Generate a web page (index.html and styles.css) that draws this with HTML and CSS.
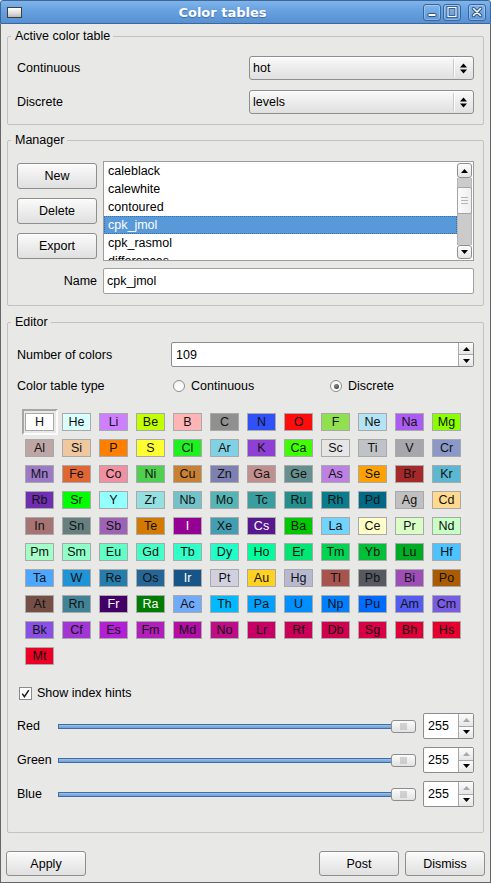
FILE: index.html
```html
<!DOCTYPE html>
<html>
<head>
<meta charset="utf-8">
<title>Color tables</title>
<link rel="stylesheet" href="styles.css">
</head>
<body>
<div class="window">
  <div class="titlebar">
    <span class="winicon"></span>
    <span class="title">Color tables</span>
    <div class="tbtns">
      <span class="tbtn"><svg width="12" height="12" viewBox="0 0 12 12"><rect x="2" y="7.5" width="8" height="3" rx="0.5" fill="#fff" stroke="#2c5386" stroke-width="1"/></svg></span>
      <span class="tbtn"><svg width="12" height="12" viewBox="0 0 12 12"><rect x="2" y="1.5" width="8" height="9" fill="none" stroke="#2c5386" stroke-width="3"/><rect x="2" y="1.5" width="8" height="9" fill="none" stroke="#fff" stroke-width="1.2"/></svg></span>
      <span class="tbtn tclose"><svg width="12" height="12" viewBox="0 0 12 12"><path d="M2.5 2.5 L9.5 9.5 M9.5 2.5 L2.5 9.5" stroke="#2c5386" stroke-width="3.4" stroke-linecap="round"/><path d="M2.5 2.5 L9.5 9.5 M9.5 2.5 L2.5 9.5" stroke="#fff" stroke-width="1.6" stroke-linecap="round"/></svg></span>
    </div>
  </div>

  <div class="client">
    <fieldset class="group g-active">
      <legend>Active color table</legend>
      <div class="inner active-grid">
        <span class="lbl">Continuous</span>
        <div class="combo"><span class="ctext">hot</span><span class="carrow"><svg width="7" height="11" viewBox="0 0 7 11"><polygon points="0,4.5 3.5,0.5 7,4.5" fill="#000"/><polygon points="0,6.5 7,6.5 3.5,10.5" fill="#000"/></svg></span></div>
        <span class="lbl">Discrete</span>
        <div class="combo"><span class="ctext">levels</span><span class="carrow"><svg width="7" height="11" viewBox="0 0 7 11"><polygon points="0,4.5 3.5,0.5 7,4.5" fill="#000"/><polygon points="0,6.5 7,6.5 3.5,10.5" fill="#000"/></svg></span></div>
      </div>
    </fieldset>

    <fieldset class="group g-manager">
      <legend>Manager</legend>
      <div class="inner manager-grid">
        <div class="mbtns">
          <div class="btn">New</div>
          <div class="btn">Delete</div>
          <div class="btn">Export</div>
        </div>
        <div class="list">
          <div class="items">
            <div class="item">caleblack</div>
            <div class="item">calewhite</div>
            <div class="item">contoured</div>
            <div class="item sel">cpk_jmol</div>
            <div class="item">cpk_rasmol</div>
            <div class="item">differences</div>
          </div>
          <div class="vscroll">
            <div class="sb-btn sb-up"><svg width="7" height="4" viewBox="0 0 7 4"><polygon points="0,4 3.5,0 7,4" fill="#000"/></svg></div>
            <div class="sb-track"><div class="sb-handle"><span></span><span></span><span></span></div></div>
            <div class="sb-btn sb-down"><svg width="7" height="4" viewBox="0 0 7 4"><polygon points="0,0 7,0 3.5,4" fill="#000"/></svg></div>
          </div>
        </div>
        <span class="lbl name-lbl">Name</span>
        <div class="textin">cpk_jmol</div>
      </div>
    </fieldset>

    <fieldset class="group g-editor">
      <legend>Editor</legend>
      <div class="inner editor">
        <div class="erow">
          <span class="lbl">Number of colors</span>
          <div class="spin">
            <span class="val">109</span>
            <span class="sbtns">
              <span class="sbtn"><svg width="7" height="4" viewBox="0 0 7 4"><polygon points="0,4 3.5,0 7,4" fill="#000"/></svg></span>
              <span class="sbtn"><svg width="7" height="4" viewBox="0 0 7 4"><polygon points="0,0 7,0 3.5,4" fill="#000"/></svg></span>
            </span>
          </div>
        </div>
        <div class="erow typerow">
          <span class="lbl">Color table type</span>
          <div class="radios">
            <span class="radio"><span class="rdot"></span>Continuous</span>
            <span class="radio on"><span class="rdot"></span>Discrete</span>
          </div>
        </div>

        <div class="swatches">
          <span class="cell sel" style="background:#FFFFFF">H</span>
          <span class="cell" style="background:#D9FFFF">He</span>
          <span class="cell" style="background:#CC80FF">Li</span>
          <span class="cell" style="background:#C2FF00">Be</span>
          <span class="cell" style="background:#FFB5B5">B</span>
          <span class="cell" style="background:#909090">C</span>
          <span class="cell" style="background:#3050F8">N</span>
          <span class="cell" style="background:#FF0D0D">O</span>
          <span class="cell" style="background:#90E050">F</span>
          <span class="cell" style="background:#B3E3F5">Ne</span>
          <span class="cell" style="background:#AB5CF2">Na</span>
          <span class="cell" style="background:#8AFF00">Mg</span>
          <span class="cell" style="background:#BFA6A6">Al</span>
          <span class="cell" style="background:#F0C8A0">Si</span>
          <span class="cell" style="background:#FF8000">P</span>
          <span class="cell" style="background:#FFFF30">S</span>
          <span class="cell" style="background:#1FF01F">Cl</span>
          <span class="cell" style="background:#80D1E3">Ar</span>
          <span class="cell" style="background:#8F40D4">K</span>
          <span class="cell" style="background:#3DFF00">Ca</span>
          <span class="cell" style="background:#E6E6E6">Sc</span>
          <span class="cell" style="background:#BFC2C7">Ti</span>
          <span class="cell" style="background:#A6A6AB">V</span>
          <span class="cell" style="background:#8A99C7">Cr</span>
          <span class="cell" style="background:#9C7AC7">Mn</span>
          <span class="cell" style="background:#E06633">Fe</span>
          <span class="cell" style="background:#F090A0">Co</span>
          <span class="cell" style="background:#50D050">Ni</span>
          <span class="cell" style="background:#C88033">Cu</span>
          <span class="cell" style="background:#7D80B0">Zn</span>
          <span class="cell" style="background:#C28F8F">Ga</span>
          <span class="cell" style="background:#668F8F">Ge</span>
          <span class="cell" style="background:#BD80E3">As</span>
          <span class="cell" style="background:#FFA100">Se</span>
          <span class="cell" style="background:#A62929">Br</span>
          <span class="cell" style="background:#5CB8D1">Kr</span>
          <span class="cell" style="background:#702EB0">Rb</span>
          <span class="cell" style="background:#00FF00">Sr</span>
          <span class="cell" style="background:#94FFFF">Y</span>
          <span class="cell" style="background:#94E0E0">Zr</span>
          <span class="cell" style="background:#73C2C9">Nb</span>
          <span class="cell" style="background:#54B5B5">Mo</span>
          <span class="cell" style="background:#3B9E9E">Tc</span>
          <span class="cell" style="background:#248F8F">Ru</span>
          <span class="cell" style="background:#0A7D8C">Rh</span>
          <span class="cell" style="background:#006985">Pd</span>
          <span class="cell" style="background:#C0C0C0">Ag</span>
          <span class="cell" style="background:#FFD98F">Cd</span>
          <span class="cell" style="background:#A67573">In</span>
          <span class="cell" style="background:#668080">Sn</span>
          <span class="cell" style="background:#9E63B5">Sb</span>
          <span class="cell" style="background:#D47A00">Te</span>
          <span class="cell lt" style="background:#940094">I</span>
          <span class="cell" style="background:#429EB0">Xe</span>
          <span class="cell lt" style="background:#57178F">Cs</span>
          <span class="cell" style="background:#00C900">Ba</span>
          <span class="cell" style="background:#70D4FF">La</span>
          <span class="cell" style="background:#FFFFC7">Ce</span>
          <span class="cell" style="background:#D9FFC7">Pr</span>
          <span class="cell" style="background:#C7FFC7">Nd</span>
          <span class="cell" style="background:#A3FFC7">Pm</span>
          <span class="cell" style="background:#8FFFC7">Sm</span>
          <span class="cell" style="background:#61FFC7">Eu</span>
          <span class="cell" style="background:#45FFC7">Gd</span>
          <span class="cell" style="background:#30FFC7">Tb</span>
          <span class="cell" style="background:#1FFFC7">Dy</span>
          <span class="cell" style="background:#00FF9C">Ho</span>
          <span class="cell" style="background:#00E675">Er</span>
          <span class="cell" style="background:#00D452">Tm</span>
          <span class="cell" style="background:#00BF38">Yb</span>
          <span class="cell" style="background:#00AB24">Lu</span>
          <span class="cell" style="background:#4DC2FF">Hf</span>
          <span class="cell" style="background:#4DA6FF">Ta</span>
          <span class="cell" style="background:#2194D6">W</span>
          <span class="cell" style="background:#267DAB">Re</span>
          <span class="cell" style="background:#266696">Os</span>
          <span class="cell lt" style="background:#175487">Ir</span>
          <span class="cell" style="background:#D0D0E0">Pt</span>
          <span class="cell" style="background:#FFD123">Au</span>
          <span class="cell" style="background:#B8B8D0">Hg</span>
          <span class="cell" style="background:#A6544D">Tl</span>
          <span class="cell" style="background:#575961">Pb</span>
          <span class="cell" style="background:#9E4FB5">Bi</span>
          <span class="cell" style="background:#AB5C00">Po</span>
          <span class="cell" style="background:#754F45">At</span>
          <span class="cell" style="background:#428296">Rn</span>
          <span class="cell lt" style="background:#420066">Fr</span>
          <span class="cell lt" style="background:#007D00">Ra</span>
          <span class="cell" style="background:#70ABFA">Ac</span>
          <span class="cell" style="background:#00BAFF">Th</span>
          <span class="cell" style="background:#00A1FF">Pa</span>
          <span class="cell" style="background:#008FFF">U</span>
          <span class="cell" style="background:#0080FF">Np</span>
          <span class="cell" style="background:#006BFF">Pu</span>
          <span class="cell" style="background:#545CF2">Am</span>
          <span class="cell" style="background:#785CE3">Cm</span>
          <span class="cell" style="background:#8A4FE3">Bk</span>
          <span class="cell" style="background:#A136D4">Cf</span>
          <span class="cell" style="background:#B31FD4">Es</span>
          <span class="cell" style="background:#B31FBA">Fm</span>
          <span class="cell" style="background:#B30DA6">Md</span>
          <span class="cell" style="background:#BD0D87">No</span>
          <span class="cell" style="background:#C70066">Lr</span>
          <span class="cell" style="background:#CC0059">Rf</span>
          <span class="cell" style="background:#D1004F">Db</span>
          <span class="cell" style="background:#D90045">Sg</span>
          <span class="cell" style="background:#E00038">Bh</span>
          <span class="cell" style="background:#E6002E">Hs</span>
          <span class="cell" style="background:#EB0026">Mt</span>
        </div>

        <div class="checkrow">
          <span class="checkbox"><svg width="11" height="11" viewBox="0 0 11 11"><path d="M2.2 5.6 L4.4 8.6 L8.8 2.2" fill="none" stroke="#1a1a1a" stroke-width="1.5"/></svg></span>
          <span>Show index hints</span>
        </div>

        <div class="sliders">
          <div class="srow">
            <span class="lbl">Red</span>
            <div class="slider"><span class="groove"></span><span class="handle"><i></i></span></div>
            <div class="spin sspin">
              <span class="val">255</span>
              <span class="sbtns">
                <span class="sbtn"><svg width="7" height="4" viewBox="0 0 7 4"><polygon points="0,4 3.5,0 7,4" fill="#a8a8a8"/></svg></span>
                <span class="sbtn"><svg width="7" height="4" viewBox="0 0 7 4"><polygon points="0,0 7,0 3.5,4" fill="#000"/></svg></span>
              </span>
            </div>
          </div>
          <div class="srow">
            <span class="lbl">Green</span>
            <div class="slider"><span class="groove"></span><span class="handle"><i></i></span></div>
            <div class="spin sspin">
              <span class="val">255</span>
              <span class="sbtns">
                <span class="sbtn"><svg width="7" height="4" viewBox="0 0 7 4"><polygon points="0,4 3.5,0 7,4" fill="#a8a8a8"/></svg></span>
                <span class="sbtn"><svg width="7" height="4" viewBox="0 0 7 4"><polygon points="0,0 7,0 3.5,4" fill="#000"/></svg></span>
              </span>
            </div>
          </div>
          <div class="srow">
            <span class="lbl">Blue</span>
            <div class="slider"><span class="groove"></span><span class="handle"><i></i></span></div>
            <div class="spin sspin">
              <span class="val">255</span>
              <span class="sbtns">
                <span class="sbtn"><svg width="7" height="4" viewBox="0 0 7 4"><polygon points="0,4 3.5,0 7,4" fill="#a8a8a8"/></svg></span>
                <span class="sbtn"><svg width="7" height="4" viewBox="0 0 7 4"><polygon points="0,0 7,0 3.5,4" fill="#000"/></svg></span>
              </span>
            </div>
          </div>
        </div>
      </div>
    </fieldset>

    <div class="footer">
      <div class="btn">Apply</div>
      <div class="spacer"></div>
      <div class="btn">Post</div>
      <div class="btn">Dismiss</div>
    </div>
  </div>
</div>
</body>
</html>
```

FILE: styles.css
```css
* { box-sizing: border-box; }
html, body { margin: 0; padding: 0; }
body {
  width: 491px;
  height: 883px;
  overflow: hidden;
  background: #e8e8e7;
  font-family: "Liberation Sans", Arial, sans-serif;
  font-size: 12.5px;
  color: #000;
}
.window {
  width: 491px;
  height: 883px;
  display: flex;
  flex-direction: column;
}

/* title bar */
.titlebar {
  height: 24px;
  flex: none;
  display: flex;
  align-items: center;
  padding: 0 4px 0 6px;
  background: linear-gradient(#80b5ea, #68a2e0 40%, #5791d3);
  border: 1px solid #3d679b;
  border-radius: 3px 3px 0 0;
}
.winicon {
  width: 15px;
  height: 11px;
  border: 1px solid #3f3f3f;
  background: linear-gradient(#ffffff, #dcdcdc 60%, #b9b9b9);
  flex: none;
}
.title {
  flex: 1;
  text-align: center;
  font-family: "DejaVu Sans", sans-serif;
  font-weight: bold;
  font-size: 13px;
  color: #fff;
  text-shadow: 0 1px 1px rgba(30, 60, 110, 0.45);
}
.tbtns { display: flex; gap: 2px; }
.tbtn {
  width: 18px;
  height: 17px;
  border: 1px solid #3a659c;
  border-radius: 3px;
  background: linear-gradient(#82b6ea, #5f99d8);
  box-shadow: inset 0 0 0 1px rgba(255, 255, 255, 0.25);
  display: flex;
  align-items: center;
  justify-content: center;
}
.tclose { margin-left: 5px; }

/* client */
.client {
  flex: 1;
  display: flex;
  flex-direction: column;
  padding: 5px 5px 6px;
  border: 1px solid #666;
  border-top: none;
}
.group {
  margin: 0 1px;
  padding: 0;
  border: 1px solid #c2c2c2;
  border-radius: 2px;
  min-width: 0;
}
.group > legend {
  margin-left: 3px;
  padding: 0 3px 0 4px;
  line-height: 15px;
  height: 15px;
}
.inner { padding: 0 9px; }
.lbl { display: flex; align-items: center; }

/* active */
.active-grid {
  padding-top: 12px;
  padding-bottom: 10px;
  display: grid;
  grid-template-columns: 232px 1fr;
  grid-auto-rows: 24px;
  row-gap: 10px;
}
.combo {
  display: flex;
  align-items: center;
  border: 1px solid #8e8e8e;
  border-radius: 3px;
  background: linear-gradient(#fafafa, #ececec 50%, #e0e0e0);
  box-shadow: inset 0 1px 0 #fff;
}
.ctext { flex: 1; padding-left: 3px; }
.carrow {
  width: 20px;
  height: 18px;
  border-left: 1px solid #c9c9c9;
  box-shadow: inset 1px 0 0 #fff;
  display: flex;
  align-items: center;
  justify-content: center;
}

/* manager */
.g-manager { margin-top: 8px; }
.manager-grid {
  padding-top: 13px;
  padding-bottom: 11px;
  display: grid;
  grid-template-columns: 80px 1fr;
  grid-template-rows: 100px 26px;
  column-gap: 6px;
  row-gap: 7px;
}
.mbtns {
  display: flex;
  flex-direction: column;
  gap: 9px;
  padding-top: 2px;
}
.btn {
  height: 26px;
  border: 1px solid #8e8e8e;
  border-radius: 3px;
  background: linear-gradient(#fbfbfb, #ededed 50%, #e0e0e0);
  box-shadow: inset 0 1px 0 #fff;
  display: flex;
  align-items: center;
  justify-content: center;
}
.list {
  display: flex;
  border: 1px solid #9c9c9c;
  background: #fff;
  overflow: hidden;
}
.items { flex: 1; padding-top: 0; overflow: hidden; }
.item { height: 18px; line-height: 18px; padding-left: 4px; white-space: nowrap; }
.item.sel {
  background: #5899da;
  color: #fff;
  outline: 1px dotted #3d6fa3;
  outline-offset: -1px;
}
.vscroll {
  width: 15px;
  margin: 1px 1px 1px 0;
  display: flex;
  flex-direction: column;
}
.sb-btn {
  height: 15px;
  border: 1px solid #8f8f8f;
  border-radius: 3px;
  background: linear-gradient(#fdfdfd, #e4e4e4);
  display: flex;
  align-items: center;
  justify-content: center;
}
.sb-down { height: 14px; }
.sb-track {
  flex: 1;
  background: #cbcbcb;
  border-left: 1px solid #b5b5b5;
  border-right: 1px solid #b5b5b5;
  padding-top: 9px;
}
.sb-handle {
  height: 27px;
  margin: 0 -1px;
  border: 1px solid #a4a4a4;
  border-radius: 2px;
  background: linear-gradient(90deg, #fafafa, #efefef);
  display: flex;
  flex-direction: column;
  align-items: center;
  justify-content: center;
  gap: 2px;
}
.sb-handle span { width: 7px; height: 1px; background: #b4b4b4; }
.name-lbl { justify-content: flex-end; }
.textin {
  border: 1px solid #a2a2a2;
  border-radius: 2px;
  background: #fff;
  padding-left: 3px;
  display: flex;
  align-items: center;
}

/* editor */
.g-editor {
  margin-top: 9px;
  flex: 1;
}
.editor { padding-top: 12px; }
.erow {
  display: grid;
  grid-template-columns: 154px 1fr;
  height: 25px;
}
.typerow { height: 20px; margin-top: 9px; }
.spin {
  display: flex;
  border: 1px solid #8c8c8c;
  border-radius: 2px;
  background: #fff;
}
.spin .val { flex: 1; padding-left: 4px; display: flex; align-items: center; }
.sbtns {
  width: 15px;
  display: flex;
  flex-direction: column;
  border-left: 1px solid #a8a8a8;
}
.sbtn {
  flex: 1;
  display: flex;
  align-items: center;
  justify-content: center;
  background: linear-gradient(#fcfcfc, #e6e6e6);
}
.sbtn + .sbtn { border-top: 1px solid #a8a8a8; }
.radios { display: flex; align-items: center; padding-left: 2px; }
.radio { width: 157px; display: flex; align-items: center; }
.rdot {
  width: 12px;
  height: 12px;
  border: 1px solid #8e8e8e;
  border-radius: 50%;
  background: linear-gradient(#f4f4f4, #ffffff);
  margin-right: 6px;
  display: flex;
  align-items: center;
  justify-content: center;
}
.radio.on .rdot::after {
  content: "";
  width: 5px;
  height: 5px;
  border-radius: 50%;
  background: radial-gradient(circle at 40% 35%, #8a8a8a, #2e2e2e);
}

.swatches {
  margin: 17px 0 0 8px;
  display: grid;
  grid-template-columns: repeat(12, 29px);
  grid-auto-rows: 18px;
  column-gap: 8px;
  row-gap: 8px;
}
.cell {
  border: 1px solid #a9a9a9;
  line-height: 16px;
  text-align: center;
  color: #111;
  font-size: 12.5px;
}
.cell.lt { color: #fff; }
.cell.sel { position: relative; }
.cell.sel::before {
  content: "";
  position: absolute;
  left: -4px;
  top: -5px;
  right: -5px;
  bottom: -5px;
  border: 2px solid;
  border-color: #a6a6a6 #fbfbfb #fbfbfb #a6a6a6;
}

.checkrow {
  margin-top: 20px;
  height: 16px;
  display: flex;
  align-items: center;
  padding-left: 2px;
}
.checkbox {
  width: 13px;
  height: 13px;
  border: 1px solid #8b8b8b;
  background: #fff;
  margin-right: 5px;
  display: flex;
  align-items: center;
  justify-content: center;
}

.sliders {
  margin-top: 12px;
  display: flex;
  flex-direction: column;
  gap: 9px;
}
.srow {
  display: grid;
  grid-template-columns: 41px 358px 1fr;
  height: 25px;
}
.slider { display: flex; align-items: center; }
.groove {
  flex: 1;
  height: 5px;
  border: 1px solid #3f6ea6;
  background: linear-gradient(#9cc1e8, #6b9dd4);
  margin-right: -3px;
}
.handle {
  width: 25px;
  height: 13px;
  border: 1px solid #8d8d8d;
  border-radius: 3px;
  background: linear-gradient(#fbfbfb, #e2e2e2);
  display: flex;
  align-items: center;
  justify-content: center;
}
.handle i {
  width: 7px;
  height: 7px;
  background-image: radial-gradient(circle, #a9a9a9 0.6px, transparent 0.8px);
  background-size: 2px 2px;
}
.sspin { height: 26px; margin-left: 7px; }

.footer {
  margin-top: 18px;
  display: flex;
  gap: 6px;
  height: 25px;
}
.footer .btn { width: 80px; height: 25px; }
.spacer { flex: 1; }
```
